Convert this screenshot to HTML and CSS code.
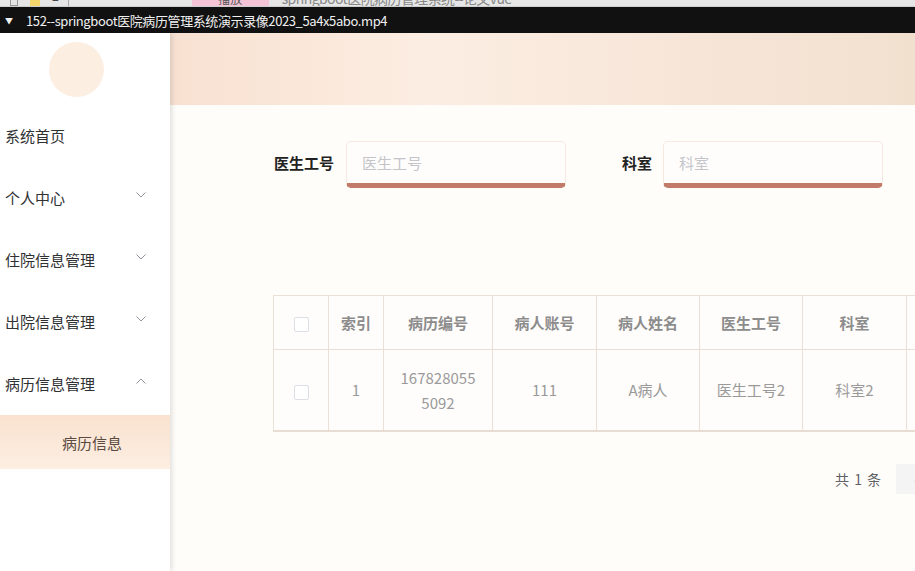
FILE: index.html
```html
<!DOCTYPE html>
<html lang="zh-CN">
<head>
<meta charset="utf-8">
<title>病历信息</title>
<link rel="stylesheet" href="styles.css">
</head>
<body>
<div class="tabstrip">
  <span class="ts-icon"></span>
  <span class="ts-folder"></span>
  <span class="ts-dash">−</span>
  <span class="ts-sep"></span>
  <span class="ts-tab">播放</span>
  <span class="ts-title">springboot医院病历管理系统--论文vue</span>
</div>
<div class="videobar">
  <span class="vb-arrow">▼</span>
  <span class="vb-title">152--springboot医院病历管理系统演示录像2023_5a4x5abo.mp4</span>
</div>
<div class="app">
  <aside class="sidebar">
    <div class="logo"><div class="avatar"></div></div>
    <nav class="menu">
      <div class="menu-item"><span>系统首页</span></div>
      <div class="menu-item"><span>个人中心</span>
        <svg class="chev" width="10" height="6" viewBox="0 0 10 6"><path d="M0.5 0.5 L5 5 L9.5 0.5" fill="none" stroke="#909399" stroke-width="1"/></svg></div>
      <div class="menu-item"><span>住院信息管理</span>
        <svg class="chev" width="10" height="6" viewBox="0 0 10 6"><path d="M0.5 0.5 L5 5 L9.5 0.5" fill="none" stroke="#909399" stroke-width="1"/></svg></div>
      <div class="menu-item"><span>出院信息管理</span>
        <svg class="chev" width="10" height="6" viewBox="0 0 10 6"><path d="M0.5 0.5 L5 5 L9.5 0.5" fill="none" stroke="#909399" stroke-width="1"/></svg></div>
      <div class="menu-item"><span>病历信息管理</span>
        <svg class="chev" width="10" height="6" viewBox="0 0 10 6"><path d="M0.5 5.5 L5 1 L9.5 5.5" fill="none" stroke="#909399" stroke-width="1"/></svg></div>
      <div class="submenu-item active">病历信息</div>
    </nav>
  </aside>
  <main class="main">
    <header class="topbar"></header>
    <section class="content">
      <form class="search">
        <label class="field">
          <span class="field-label">医生工号</span>
          <span class="input"><span class="placeholder">医生工号</span></span>
        </label>
        <label class="field">
          <span class="field-label">科室</span>
          <span class="input"><span class="placeholder">科室</span></span>
        </label>
      </form>
      <table class="grid">
        <colgroup>
          <col class="c-check"><col class="c-idx"><col class="c-wide"><col class="c-n"><col class="c-n2"><col class="c-n2"><col class="c-n"><col class="c-n"><col class="c-n">
        </colgroup>
        <thead>
          <tr>
            <th><span class="check"></span></th>
            <th>索引</th>
            <th>病历编号</th>
            <th>病人账号</th>
            <th>病人姓名</th>
            <th>医生工号</th>
            <th>科室</th>
            <th>病历详情</th>
            <th>操作</th>
          </tr>
        </thead>
        <tbody>
          <tr>
            <td><span class="check"></span></td>
            <td>1</td>
            <td class="wrap">1678280555092</td>
            <td>111</td>
            <td>A病人</td>
            <td>医生工号2</td>
            <td>科室2</td>
            <td>详情</td>
            <td>查看</td>
          </tr>
        </tbody>
      </table>
      <div class="pager">
        <span class="total">共 1 条</span>
        <span class="pbtn">‹</span>
      </div>
    </section>
  </main>
</div>
</body>
</html>
```
FILE: styles.css
```css
* { box-sizing: border-box; }
html, body {
  margin: 0;
  padding: 0;
  width: 915px;
  height: 571px;
  overflow: hidden;
  font-family: "Noto Sans CJK SC", "Noto Sans", sans-serif;
  background: #fffdfa;
}
.tabstrip {
  height: 7px;
  background: #e6e6e6;
  display: flex;
  align-items: flex-end;
  overflow: hidden;
  border-bottom: 1px solid #cfcfcf;
}
.tabstrip > span { flex: none; }
.ts-icon { width: 8px; height: 12px; margin-left: 10px; border: 1px solid #999; }
.ts-folder { width: 10px; height: 12px; margin-left: 12px; background: #f5d66a; }
.ts-dash { margin-left: 12px; font-size: 12px; line-height: 12px; color: #333; }
.ts-sep { width: 1px; height: 12px; margin-left: 9px; background: #aaa; }
.ts-tab {
  margin-left: 123px; width: 77px; height: 14px; background: #f4c4d6;
  font-size: 12px; line-height: 14px; color: #555; text-align: center;
}
.ts-title { margin-left: 13px; font-size: 14px; line-height: 15px; color: #888; letter-spacing: -0.6px; }

.videobar {
  height: 26px;
  background: #111;
  color: #f0f0f0;
  display: flex;
  align-items: center;
  font-size: 13px;
}
.vb-arrow { font-size: 8px; margin-left: 5px; width: 21px; }
.vb-title { letter-spacing: -0.4px; }

.app {
  display: flex;
  height: 538px;
}
.sidebar {
  width: 170px;
  flex: none;
  background: #fff;
  position: relative;
  z-index: 2;
  box-shadow: 2px 0 5px rgba(0, 0, 0, 0.12);
}
.logo {
  height: 72px;
  display: flex;
  align-items: center;
  justify-content: center;
  padding-right: 18px;
}
.avatar {
  width: 55px;
  height: 55px;
  border-radius: 50%;
  background: #fdeee2;
}
.menu { display: flex; flex-direction: column; }
.menu-item {
  height: 62px;
  display: flex;
  align-items: center;
  justify-content: space-between;
  padding: 0 24px 2px 5px;
  font-size: 15px;
  color: #303133;
}
.chev { flex: none; margin-top: -4px; }
.submenu-item {
  height: 54px;
  display: flex;
  align-items: center;
  padding-left: 62px;
  font-size: 15px;
  color: #5a4a40;
}
.submenu-item.active {
  background: linear-gradient(180deg, #f9e2cf 0%, #fdeee2 100%);
}

.main {
  flex: 1;
  display: flex;
  flex-direction: column;
  min-width: 0;
  overflow: hidden;
}
.topbar {
  height: 72px;
  flex: none;
  background: linear-gradient(90deg, #f8e1d1 0%, #fcede2 35%, #f7e6d8 70%, #f2e0cf 100%);
}
.content {
  flex: 1;
  background: #fffdfa;
  padding: 36px 0 0 103px;
  overflow: hidden;
}
.search {
  display: flex;
  margin: 0;
  gap: 55px;
}
.field {
  display: flex;
  align-items: center;
  gap: 12px;
}
.field + .field { gap: 11px; }
.field-label {
  font-size: 15px;
  font-weight: bold;
  color: #222;
  padding-left: 1px;
  margin-top: -4px;
}
.input {
  width: 220px;
  height: 47px;
  background: #fffdfb;
  border: 1px solid #f7e9df;
  border-bottom: 5px solid #c27a69;
  border-radius: 5px;
  display: flex;
  align-items: center;
  padding-left: 15px;
}
.placeholder {
  font-size: 15px;
  color: #c3c5cb;
}

.grid {
  margin-top: 107px;
  border-collapse: collapse;
  table-layout: fixed;
  width: 841px;
  background: #fffdfb;
}
.c-check { width: 55px; }
.c-idx { width: 55px; }
.c-wide { width: 109px; }
.c-n { width: 104px; }
.c-n2 { width: 103px; }
.grid th, .grid td {
  border: 1px solid #ebe0d6;
  text-align: center;
  font-size: 15px;
  padding: 0 10px;
}
.grid th {
  height: 54px;
  color: #8c8c8c;
  font-weight: bold;
}
.grid td {
  height: 81px;
  color: #9a9a9a;
  line-height: 25px;
  word-break: break-all;
}
.grid td.wrap { padding: 0 14px; }
.grid tbody tr td { border-bottom: 2px solid #e8ddd3; }
.check {
  display: inline-block;
  width: 15px;
  height: 15px;
  border: 1px solid #dcdfe6;
  border-radius: 2px;
  background: #fff;
  vertical-align: middle;
}
.pager {
  display: flex;
  align-items: center;
  margin-top: 32px;
  padding-left: 562px;
  gap: 14px;
  white-space: nowrap;
}
.total {
  flex: none;
  font-size: 14px;
  color: #606266;
  letter-spacing: 1px;
}
.pbtn {
  width: 40px;
  height: 30px;
  flex: none;
  background: #f4f4f5;
  color: #c0c4cc;
  display: flex;
  align-items: center;
  justify-content: center;
  font-size: 14px;
}
```
